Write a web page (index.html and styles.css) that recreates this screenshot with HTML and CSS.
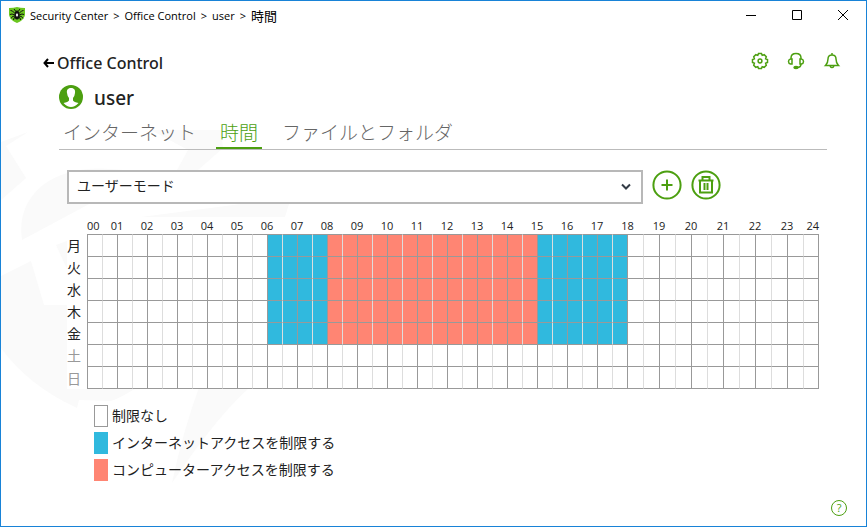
FILE: index.html
```html
<!DOCTYPE html>
<html lang="ja">
<head>
  <meta charset="UTF-8">
  <meta name="viewport" content="width=device-width, initial-scale=1.0">
  <title>Office Control</title>
  <link rel="stylesheet" href="styles.css">
</head>
<body>
  <div class="window">
    <svg class="watermark" width="290" height="370" viewBox="0 120 290 370" aria-hidden="true">
      <path d="M0 142L27 132L5 146L25 178L0 200Z"/>
      <path d="M150 130H220L222 148L197 170H176L187 150Z"/>
      <path d="M21 240Q16 206 42 185Q68 166 110 169L150 172V202H92Z"/>
      <path d="M140 217L240 204H288L284 217Z"/>
      <path d="M55 245L87 233V270L72 282Z"/>
      <path d="M0 276L30 261L43 305H87V382H145Q120 398 110 401L78 400L76 408Q28 386 0 348Z"/>
      <path d="M200 382H255Q220 410 171 483Q182 430 200 382Z"/>
    </svg>

    <header class="titlebar">
      <svg class="logo" width="16" height="16" viewBox="0 0 16 16" aria-hidden="true">
        <path d="M0 1Q5 1 8 0Q11 1 16 1V8Q15 13 8 16Q1 13 0 8Z" fill="#6ac61f"/>
        <path d="M5 2L6.500 4M11 2L9.500 4M1.500 3.500L3.500 4L6 6.500M14.500 3.500L12.500 4L10 6.500M1 7.500L3 7L6 8M15 7.500L13 7L10 8M2 11.500L3.500 9.500L6 9M14 11.500L12.500 9.500L10 9M4.500 13L5 11L6.500 10M11.500 13L11 11L9.500 10" fill="none" stroke="#111"/>
        <ellipse cx="8" cy="8" rx="2.500" ry="4.500" fill="#111"/>
        <path d="M8 6L9.200 8L8 10L6.800 8Z" fill="#fff"/>
      </svg>
      <div class="path">
        <span>Security Center</span>
        <span>&gt;</span>
        <span>Office Control</span>
        <span>&gt;</span>
        <span>user</span>
        <span>&gt;</span>
        <span class="path-jp">時間</span>
      </div>
      <div class="window-buttons">
        <button type="button" aria-label="Minimize"><svg width="12" height="12" viewBox="0 0 12 12"><path d="M1 6.500H11"/></svg></button>
        <button type="button" aria-label="Maximize"><svg width="12" height="12" viewBox="0 0 12 12"><path d="M1.500 1.500H10.500V10.500H1.500Z"/></svg></button>
        <button type="button" aria-label="Close"><svg width="12" height="12" viewBox="0 0 12 12"><path d="M1 1L11 11M11 1L1 11"/></svg></button>
      </div>
    </header>

    <div class="top">
      <a class="back" href="#">
        <svg width="11" height="10" viewBox="0 0 11 10" aria-hidden="true"><path d="M5 1L1.500 5L5 9M1.500 5H11"/></svg>
        Office Control
      </a>
      <div class="tools">
        <button type="button" aria-label="Settings">
          <svg width="18" height="18" viewBox="0 0 18 18"><path d="M7.500 1.500H10.500L11.200 3.400L13.200 2.700L15.300 4.800L14.600 6.800L16.500 7.500V10.500L14.600 11.200L15.300 13.200L13.200 15.300L11.200 14.600L10.500 16.500H7.500L6.800 14.600L4.800 15.300L2.700 13.200L3.400 11.200L1.500 10.500V7.500L3.400 6.800L2.700 4.800L4.800 2.700L6.800 3.400Z"/><circle cx="9" cy="9" r="1.900"/></svg>
        </button>
        <button type="button" aria-label="Support">
          <svg width="18" height="18" viewBox="0 0 18 18"><path d="M4 7V6C4 3 6 1.500 9 1.500S14 3 14 6V7M5 7H3.500Q1.500 7.500 1.500 9.500T3.500 12H5ZM13 7H14.500Q16.500 7.500 16.500 9.500T14.500 12H13ZM14 12Q14 15.500 10 15.500"/><ellipse class="solid" cx="9" cy="15.500" rx="2" ry="1"/></svg>
        </button>
        <button type="button" aria-label="Notifications">
          <svg width="18" height="18" viewBox="0 0 18 18"><path d="M2.500 13.500Q5 11 5 7Q5 3 9 3T13 7Q13 11 15.500 13.500ZM9 1V3"/><path d="M7 14Q9 17 11 14"/></svg>
        </button>
      </div>
    </div>

    <main class="content">
      <div class="user">
        <svg width="24" height="24" viewBox="0 0 24 24" aria-hidden="true">
          <circle cx="12" cy="12" r="12" fill="#4c9f10"/>
          <path d="M12 3C8.500 3 7.500 5.500 8 8Q8.500 12 10 13V15.500Q9 17 4.500 18Q8 22 12 22T19.500 18Q15 17 14 15.500V13Q15.500 12 16 8C16.500 5.500 15.500 3 12 3Z" fill="#fff"/>
        </svg>
        <h1>user</h1>
      </div>

      <nav class="tabs">
        <a href="#">インターネット</a>
        <a class="active" href="#">時間</a>
        <a href="#">ファイルとフォルダ</a>
      </nav>

      <div class="mode">
        <div class="select-box">
          <select aria-label="モード">
            <option>ユーザーモード</option>
          </select>
          <svg width="10" height="8" viewBox="0 0 10 8" aria-hidden="true"><path d="M1 1.500L5 5.500L9 1.500"/></svg>
        </div>
        <button type="button" aria-label="追加">
          <svg width="30" height="30" viewBox="0 0 30 30"><circle cx="15" cy="15" r="13.600"/><path d="M15 9.500V20.500M9.500 15H20.500"/></svg>
        </button>
        <button type="button" aria-label="削除">
          <svg width="30" height="30" viewBox="0 0 30 30"><circle cx="15" cy="15" r="13.600"/><path d="M7.500 10.500H22.500M11.500 10V7H18.500V10M9 11V22.500H21V11M13.500 13V20M16.500 13V20"/></svg>
        </button>
      </div>

      <table class="schedule">
        <colgroup>
          <col class="col-day">
          <col class="col-half" span="36">
          <col span="12">
        </colgroup>
        <thead><tr id="hours"><td></td></tr></thead>
        <tbody id="days"></tbody>
      </table>

      <ul class="legend">
        <li><span class="box"></span>制限なし</li>
        <li><span class="box internet"></span>インターネットアクセスを制限する</li>
        <li><span class="box computer"></span>コンピューターアクセスを制限する</li>
      </ul>
    </main>

    <footer class="footer">
      <button class="help" type="button" aria-label="ヘルプ">?</button>
    </footer>
  </div>

  <script>
    const days = ["月", "火", "水", "木", "金", "土", "日"];
    const hours = document.getElementById("hours");
    const body = document.getElementById("days");

    // hour labels sit over the lines, so each one spans the half hours around it
    for (let h = 0; h <= 24; h++) {
      const th = document.createElement("th");
      th.scope = "col";
      th.colSpan = h === 0 || h === 24 ? 1 : 2;
      th.innerText = String(h).padStart(2, "0");
      hours.appendChild(th);
    }

    days.forEach((day, d) => {
      const row = body.insertRow();
      const th = document.createElement("th");
      const weekend = d > 4;
      th.scope = "row";
      th.innerText = day;
      if (weekend) th.className = "weekend";
      row.appendChild(th);

      for (let i = 0; i < 48; i++) {
        const cell = row.insertCell();
        const hour = i / 2;
        if (weekend) continue;
        if (hour >= 8 && hour < 15) cell.className = "computer";
        else if (hour >= 6 && hour < 18) cell.className = "internet";
      }
    });
  </script>
</body>
</html>
```

FILE: styles.css
```css
* {
  box-sizing: border-box;
}

body {
  margin: 0;
  font-family: "Noto Sans", "Noto Sans CJK JP", sans-serif;
  font-size: 14px;
  color: #222;
  background: #fff;
}

button {
  padding: 0;
  border: none;
  background: none;
  cursor: pointer;
}

svg {
  display: block;
}

.window {
  position: relative;
  display: flex;
  flex-direction: column;
  min-height: 100vh;
  border: 1px solid #1883d7;
}

.watermark {
  position: absolute;
  left: 0;
  top: 119px;
  z-index: -1;
  fill: #fafafa;
}

.titlebar {
  display: flex;
  align-items: center;
  height: 28px;
  padding-left: 8px;
  color: #000;
}

.path {
  display: flex;
  align-items: center;
  gap: 5px;
  margin-left: 5px;
  font-family: "Open Sans", "Noto Sans CJK JP", sans-serif;
  font-size: 11px;
}

.path-jp {
  font-size: 13px;
}

.window-buttons {
  display: flex;
  margin-left: auto;
}

.window-buttons button {
  display: flex;
  align-items: center;
  justify-content: center;
  width: 46px;
  height: 28px;
}

.window-buttons path {
  fill: none;
  stroke: #000;
}

.top {
  display: flex;
  align-items: center;
  justify-content: space-between;
  height: 40px;
  margin-top: 13px;
  padding: 0 25px 0 42px;
}

.back {
  display: flex;
  align-items: center;
  gap: 3px;
  padding-top: 2px;
  font-size: 16px;
  font-weight: 500;
  color: #222;
  text-decoration: none;
}

.back path {
  fill: none;
  stroke: #000;
  stroke-width: 2;
}

.tools {
  display: flex;
  gap: 18px;
  padding-bottom: 2px;
}

.tools svg {
  fill: none;
  stroke: #4c9f10;
  stroke-width: 1.5;
}

.tools .solid {
  fill: #4c9f10;
}

.content {
  padding: 0 39px 0 58px;
}

.user {
  display: flex;
  align-items: center;
  gap: 11px;
  height: 30px;
}

.user h1 {
  margin: 0;
  padding-top: 2px;
  font-size: 19px;
  font-weight: 500;
}

.tabs {
  display: flex;
  gap: 16px;
  height: 38px;
  border-bottom: 1px solid #bbb;
}

.tabs a {
  height: 37px;
  padding: 0 4px;
  font-size: 19px;
  font-weight: 300;
  line-height: 42px;
  color: #666;
  text-decoration: none;
}

.tabs .active {
  border-bottom: 2px solid #4c9f10;
  color: #4c9f10;
}

.mode {
  display: flex;
  align-items: flex-start;
  gap: 9px;
  margin: 20px 106px 0 8px;
}

.mode button svg {
  fill: none;
  stroke: #4c9f10;
  stroke-width: 2;
}

.select-box {
  display: grid;
  flex: 1;
  align-items: center;
}

.select-box select,
.select-box svg {
  grid-area: 1 / 1;
}

.select-box select {
  height: 34px;
  padding: 0 8px 3px;
  border: 2px solid #b8b8b8;
  border-radius: 0;
  appearance: none;
  background: #fff;
  font-family: inherit;
  font-size: 14px;
  color: #222;
}

.select-box svg {
  justify-self: end;
  margin-right: 12px;
  fill: none;
  stroke: #333c46;
  stroke-width: 2;
  pointer-events: none;
}

.schedule {
  width: calc(100% - 16px);
  margin: 13px 8px 0;
  border-collapse: separate;
  border-spacing: 0;
  table-layout: fixed;
}

.col-day {
  width: 20px;
}

.col-half {
  width: 15px;
}

.schedule th {
  padding: 0;
  font-weight: 400;
  white-space: nowrap;
  background: #fff;
}

.schedule td {
  padding: 0;
}

.schedule thead th {
  height: 17px;
  font-family: "Open Sans", sans-serif;
  font-size: 11px;
  line-height: 17px;
}

.schedule thead th:nth-child(2) {
  text-align: left;
}

.schedule thead th:last-child {
  text-align: right;
}

.schedule tbody th {
  height: 22px;
  padding-top: 2px;
  font-size: 14px;
  line-height: 20px;
  text-align: left;
}

.schedule .weekend {
  color: #999;
}

.schedule tbody td {
  border-top: 1px solid #999;
  border-left: 1px solid #ddd;
  background: #fff;
}

.schedule tbody td:nth-child(even) {
  border-left-color: #999;
}

.schedule tbody td:last-child {
  border-right: 1px solid #999;
}

.schedule tbody tr:last-child th {
  height: 23px;
}

.schedule tbody tr:last-child td {
  border-bottom: 1px solid #999;
}

.schedule tbody .internet,
.legend .internet {
  background: #30b9de;
}

.schedule tbody .computer,
.legend .computer {
  background: #ff8573;
}

.legend {
  display: grid;
  gap: 5px;
  margin: 16px 0 0 35px;
  padding: 0;
  list-style: none;
}

.legend li {
  display: flex;
  align-items: center;
  gap: 4px;
  height: 22px;
  font-size: 14px;
  line-height: 20px;
}

.box {
  width: 14px;
  height: 22px;
  background: #fff;
}

.box:not(.internet):not(.computer) {
  border: 1px solid #999;
}

.footer {
  display: flex;
  justify-content: flex-end;
  margin-top: auto;
  padding: 0 19px 10px 0;
}

.help {
  width: 16px;
  height: 16px;
  border: 1px solid #4c9f10;
  border-radius: 50%;
  font-family: "Open Sans", sans-serif;
  font-size: 11px;
  line-height: 14px;
  color: #4c9f10;
}
```
